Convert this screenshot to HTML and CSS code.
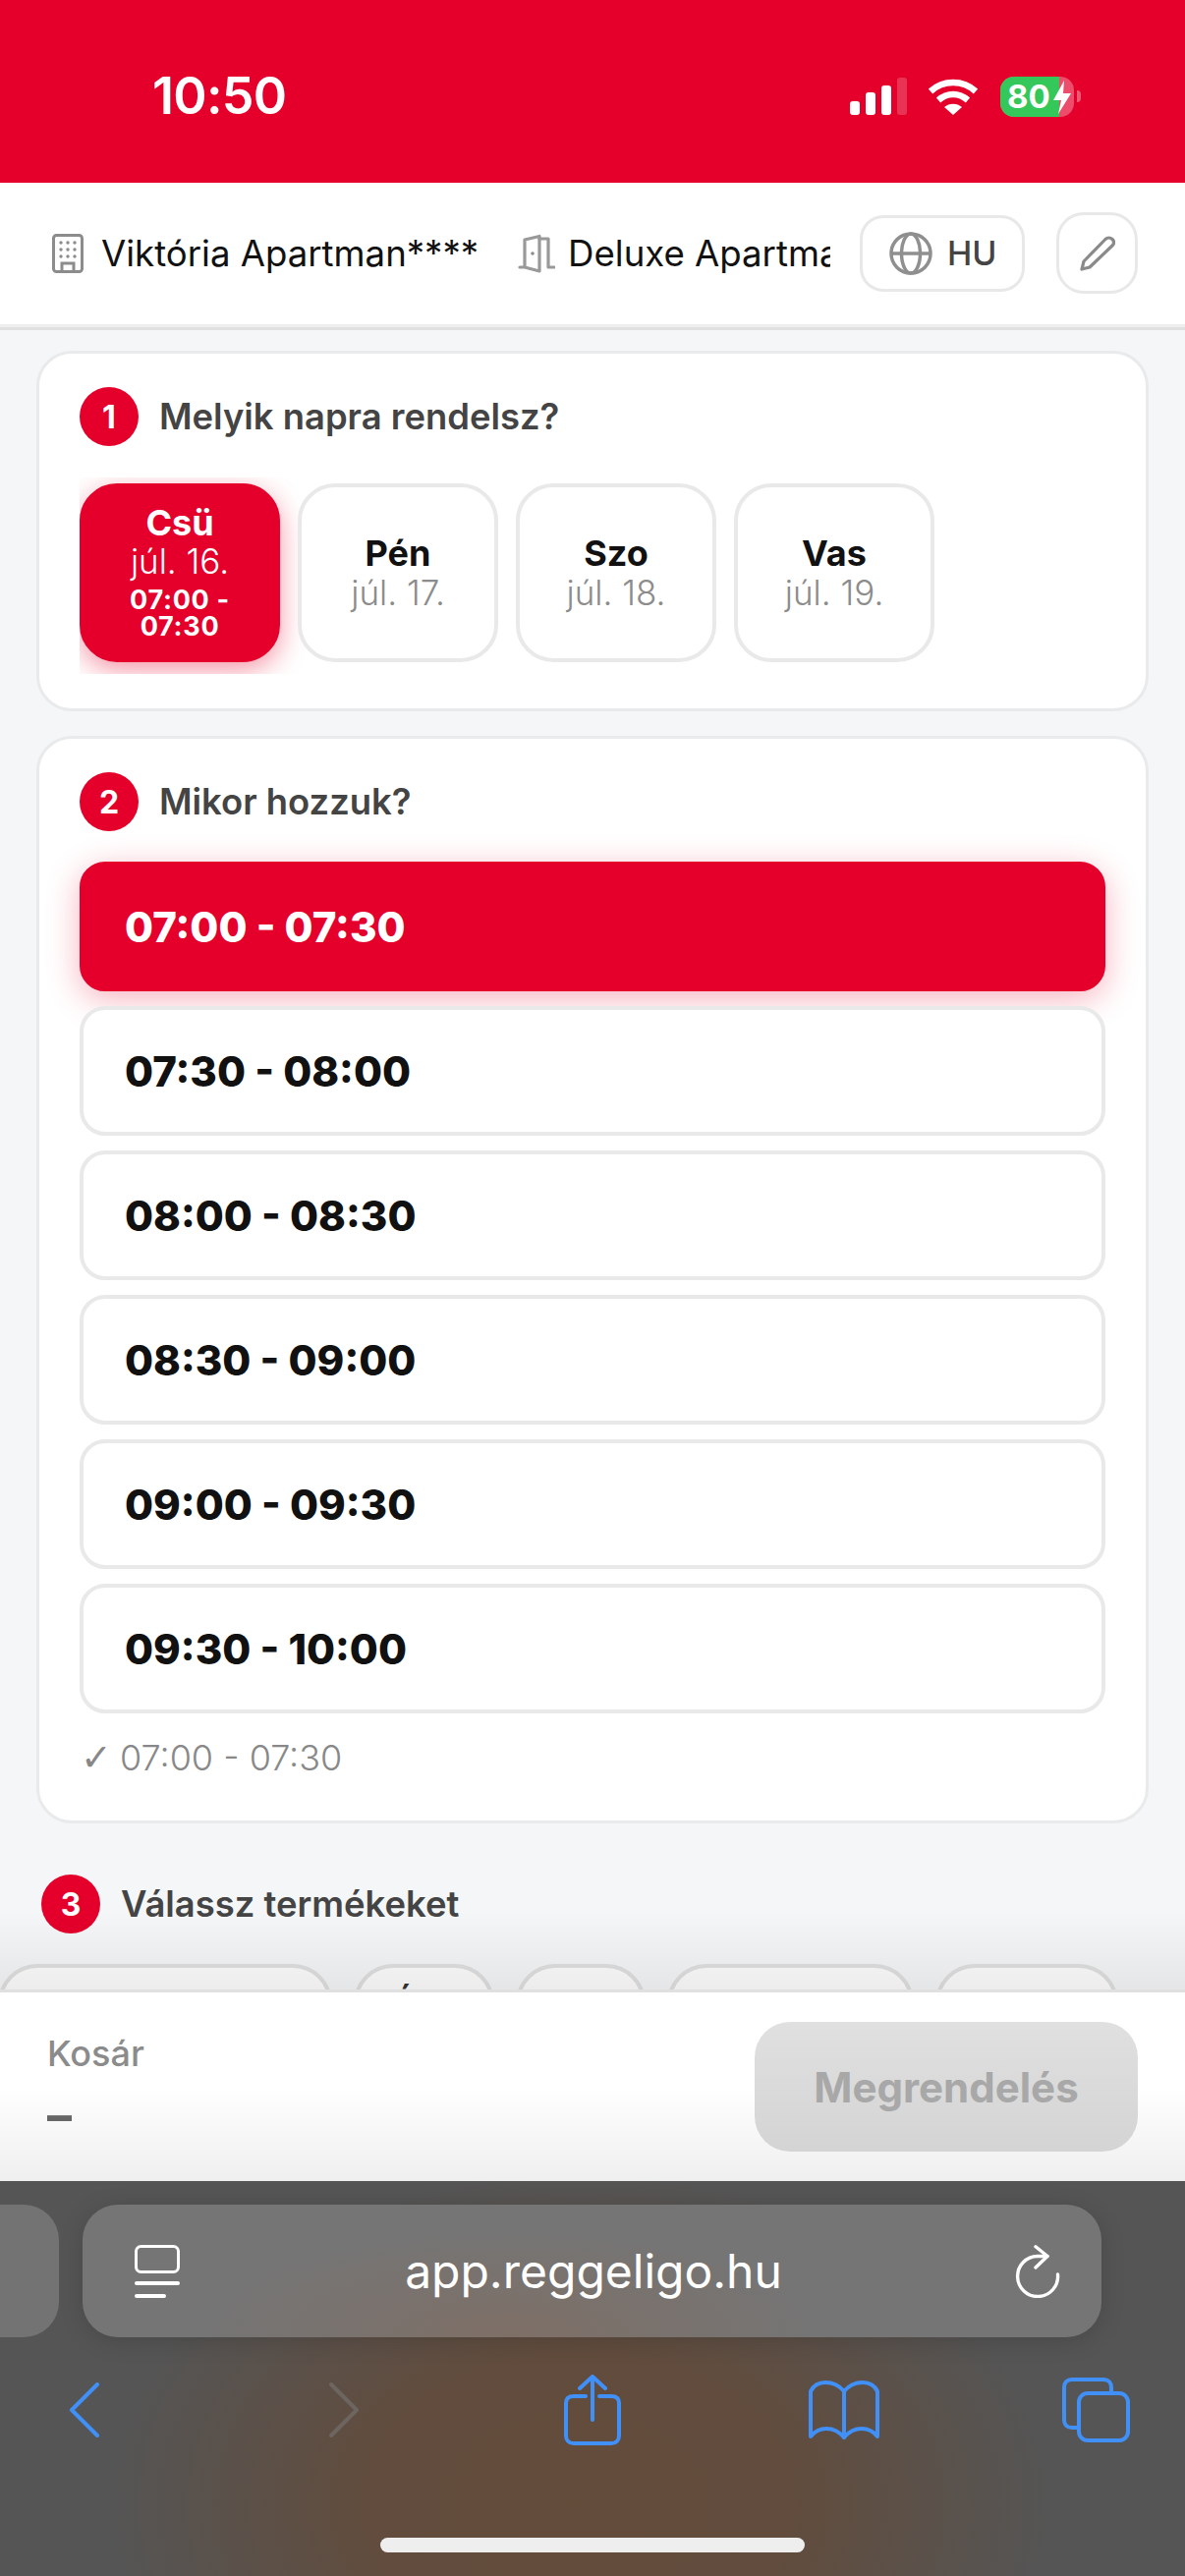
FILE: index.html
```html
<!DOCTYPE html>
<html lang="hu">
<head>
<meta charset="utf-8">
<title>Reggeligo</title>
<link rel="stylesheet" href="styles.css">
</head>
<body>
<div class="page">
  <div class="status">
    <span class="clock">10:50</span>
    <div class="status-icons">
      <svg width="58" height="38" viewBox="0 0 58 38"><g fill="#fff"><rect x="0" y="24" width="10" height="14" rx="3"/><rect x="16" y="15" width="10" height="23" rx="3"/><rect x="32" y="8" width="10" height="30" rx="3"/><rect x="48" y="0" width="10" height="38" rx="3" opacity=".2"/></g></svg>
      <svg class="wifi" width="52" height="38" viewBox="0 0 52 38"><g fill="none" stroke="#fff" stroke-width="6.500"><path d="M3 14 C16 2 36 2 49 14"/><path d="M11 23 C20 15 32 15 41 23"/></g><path d="M26 38 L17 30 C22 25.500 30 25.500 35 30 Z" fill="#fff"/></svg>
      <div class="battery"><div class="battery-fill"></div><span class="battery-num">80</span><svg class="bolt" width="18" height="34" viewBox="0 0 18 34"><path d="M11 0 L0 20 H8 L5 34 L18 13 H10 Z" fill="#fff"/></svg></div>
      <span class="nub"></span>
    </div>
  </div>

  <header class="header">
    <div class="crumbs">
      <svg class="ic-building" width="32" height="40" viewBox="0 0 32 40"><rect x="1.500" y="1.500" width="29" height="37" rx="3" fill="none" stroke="#8c8c8c" stroke-width="3"/><g fill="#8c8c8c"><circle cx="9" cy="9" r="1.700"/><circle cx="16" cy="9" r="1.700"/><circle cx="23" cy="9" r="1.700"/><circle cx="9" cy="16" r="1.700"/><circle cx="16" cy="16" r="1.700"/><circle cx="23" cy="16" r="1.700"/><circle cx="9" cy="23" r="1.700"/><circle cx="16" cy="23" r="1.700"/><circle cx="23" cy="23" r="1.700"/></g><path d="M10 38 V30 H22 V38" fill="none" stroke="#8c8c8c" stroke-width="3"/></svg>
      <span class="crumb-text">Viktória Apartman****</span>
      <svg class="ic-door" width="38" height="40" viewBox="0 0 38 40"><g fill="none" stroke="#999" stroke-width="3.200" stroke-linejoin="round" stroke-linecap="round"><path d="M2 34 H7 V6 L22 2.500 V38 L7 34"/><path d="M22 5 H31 V34 H37"/></g><circle cx="15" cy="20" r="1.800" fill="#8c8c8c"/></svg>
      <span class="crumb-text">Deluxe Apartman</span>
    </div>
    <div class="lang-btn">
      <svg width="44" height="44" viewBox="0 0 44 44"><g fill="none" stroke="#8f8f8f" stroke-width="3.500"><circle cx="22" cy="22" r="20"/><ellipse cx="22" cy="22" rx="9.500" ry="20"/><path d="M2 22 H42"/></g></svg>
      <span class="lang-text">HU</span>
    </div>
    <div class="edit-btn">
      <svg width="36" height="36" viewBox="0 0 36 36"><path d="M26 3.500 C28 1.500 31 1.500 33 3.500 C35 5.500 35 8 33 10 L10 32 L2 34 L4 26 Z" fill="none" stroke="#8a8a8a" stroke-width="3.200" stroke-linejoin="round"/></svg>
    </div>
  </header>

  <main class="main">
    <section class="card card-days">
      <div class="step">
        <span class="badge">1</span>
        <h2 class="step-title">Melyik napra rendelsz?</h2>
      </div>
      <div class="days">
        <div class="day day-on">
          <span class="day-name">Csü</span>
          <span class="day-date">júl. 16.</span>
          <span class="day-time">07:00 - 07:30</span>
        </div>
        <div class="day"><span class="day-name">Pén</span><span class="day-date">júl. 17.</span></div>
        <div class="day"><span class="day-name">Szo</span><span class="day-date">júl. 18.</span></div>
        <div class="day"><span class="day-name">Vas</span><span class="day-date">júl. 19.</span></div>
      </div>
    </section>

    <section class="card card-times">
      <div class="step">
        <span class="badge">2</span>
        <h2 class="step-title">Mikor hozzuk?</h2>
      </div>
      <div class="times">
        <div class="time time-on">07:00 - 07:30</div>
        <div class="time">07:30 - 08:00</div>
        <div class="time">08:00 - 08:30</div>
        <div class="time">08:30 - 09:00</div>
        <div class="time">09:00 - 09:30</div>
        <div class="time">09:30 - 10:00</div>
      </div>
      <p class="picked"><span class="tick">✓</span>07:00 - 07:30</p>
    </section>

    <div class="step step-free">
      <span class="badge">3</span>
      <h2 class="step-title">Válassz termékeket</h2>
    </div>
    <div class="chips">
      <span class="chip chip-a"></span>
      <span class="chip chip-b">É</span>
      <span class="chip chip-c"></span>
      <span class="chip chip-d"></span>
      <span class="chip chip-e"></span>
    </div>
    <div class="fade"></div>
  </main>

  <div class="cart">
    <div class="cart-info">
      <span class="cart-label">Kosár</span>
      <span class="cart-sum">–</span>
    </div>
    <div class="order-btn">Megrendelés</div>
  </div>

  <div class="safari">
    <div class="url-row">
      <div class="prev-tab"></div>
      <div class="url-bar">
        <svg width="46" height="54" viewBox="0 0 46 54"><rect x="1.500" y="1.500" width="43" height="26" rx="5" fill="none" stroke="#fff" stroke-width="3"/><rect x="0" y="37" width="46" height="4" rx="2" fill="#fff"/><rect x="0" y="50" width="32" height="4" rx="2" fill="#fff"/></svg>
        <span class="url-text">app.reggeligo.hu</span>
        <svg width="46" height="54" viewBox="0 0 46 54"><g fill="none" stroke="#fff" stroke-width="3.400" stroke-linecap="round" stroke-linejoin="round"><path d="M43.500 30 A20.500 20.500 0 1 1 23 11.500 H33"/><path d="M21 1.800 L33 11.500 L21 23"/></g></svg>
      </div>
    </div>
    <nav class="tools">
      <svg class="tool-back" width="32" height="56" viewBox="0 0 32 56"><path d="M29 2 L3 28 L29 54" fill="none" stroke="#4090f8" stroke-width="4" stroke-linecap="round" stroke-linejoin="round"/></svg>
      <svg class="tool-forward" width="32" height="56" viewBox="0 0 32 56"><path d="M3 2 L29 28 L3 54" fill="none" stroke="#6d655f" stroke-width="4" stroke-linecap="round" stroke-linejoin="round"/></svg>
      <svg class="tool-share" width="58" height="72" viewBox="0 0 58 72"><g fill="none" stroke="#4090f8" stroke-width="4" stroke-linecap="round" stroke-linejoin="round"><path d="M22 22 H10 C5 22 2 24 2 29 V62 C2 67 5 70 10 70 H48 C53 70 56 67 56 62 V29 C56 24 53 22 48 22 H36"/><path d="M29 46 V3"/><path d="M16 14 L29 2 L42 14"/></g></svg>
      <svg class="tool-book" width="72" height="60" viewBox="0 0 72 60"><g fill="none" stroke="#4090f8" stroke-width="4" stroke-linecap="round" stroke-linejoin="round"><path d="M36 11 C31 5 24 2 17 2 C10 2 5 5 2 11 V57 C6 52 11 49 18 49 C25 49 31 52 36 58 C41 52 47 49 54 49 C61 49 66 52 70 57 V11 C67 5 62 2 55 2 C48 2 41 5 36 11 Z"/><path d="M36 11 V58"/></g></svg>
      <svg class="tool-tabs" width="70" height="66" viewBox="0 0 70 66"><g fill="none" stroke="#4090f8" stroke-width="4" stroke-linejoin="round"><path d="M16 51 H10 C5 51 2 48 2 43 V10 C2 5 5 2 10 2 H42 C47 2 50 5 50 10 V16"/><rect x="17" y="16" width="50" height="48" rx="9"/></g></svg>
    </nav>
    <div class="home-bar"></div>
  </div>
</div>
</body>
</html>
```

FILE: styles.css
```css
* { box-sizing: border-box; }
html, body { margin: 0; padding: 0; }
body { font-family: Inter, "Liberation Sans", sans-serif; background: #f5f6f8; }
.page { width: 1206px; height: 2622px; display: flex; flex-direction: column; overflow: hidden; }

.status { height: 186px; flex: none; background: #e4002b; display: flex; align-items: flex-start; justify-content: space-between; padding: 71px 106px 0 155px; color: #fff; }
.clock { font-size: 52px; line-height: 54px; font-weight: 600; letter-spacing: -.7px; }
.status-icons { display: flex; align-items: center; margin-top: 7px; height: 40px; }
.wifi { margin-left: 21px; }
.battery { position: relative; margin-left: 22px; width: 75px; height: 41px; border-radius: 14px; background: rgba(255,255,255,.3); overflow: hidden; }
.battery-fill { width: 60px; height: 100%; background: #34c759; }
.battery-num { position: absolute; left: 7px; top: 0; font-size: 33px; line-height: 41px; font-weight: 700; color: #fff; }
.bolt { position: absolute; left: 54px; top: 4px; }
.nub { width: 4px; height: 12px; margin-left: 3px; border-radius: 0 4px 4px 0; background: rgba(255,255,255,.35); }

.header { height: 150px; flex: none; background: #fff; border-bottom: 3px solid #e0e0e0; box-shadow: inset 0 -3px 0 #eee; display: flex; align-items: center; padding: 0 48px 4px 53px; }
.crumbs { width: 792px; flex: none; display: flex; align-items: center; overflow: hidden; white-space: nowrap; }
.ic-building { flex: none; margin-right: 18px; }
.ic-door { flex: none; margin: 0 13px 0 40px; }
.crumb-text { font-size: 36.600px; color: #111; flex: none; }
.lang-btn { width: 168px; height: 78px; margin-left: 30px; flex: none; border: 3px solid #e8e8e8; border-radius: 24px; display: flex; align-items: center; padding-left: 27px; gap: 15px; }
.lang-text { font-size: 34px; font-weight: 500; color: #444; }
.edit-btn { width: 83px; height: 83px; margin-left: 32px; flex: none; border: 3px solid #e8e8e8; border-radius: 28px; display: flex; align-items: center; justify-content: center; }

.main { position: relative; flex: 1; min-height: 0; padding: 21px 37px 0; display: flex; flex-direction: column; overflow: hidden; }
.card { background: #fff; border: 3px solid #e9eaeb; border-radius: 36px; padding: 34px 41px 0; flex: none; }
.card-days { height: 367px; }
.card-times { height: 1107px; margin-top: 25px; }
.step { display: flex; align-items: center; gap: 21px; height: 60px; }
.badge { width: 60px; height: 60px; border-radius: 50%; background: #e4002b; color: #fff; font-size: 32px; font-weight: 700; display: flex; align-items: center; justify-content: center; flex: none; }
.step-title { margin: 0; font-size: 36.400px; line-height: 60px; font-weight: 600; color: #444; }
.days { display: flex; gap: 18px; margin: 32px 0 0; padding: 6px 0 12px; overflow: hidden; }
.day { width: 204px; height: 182px; flex: none; background: #fff; border: 4px solid #e9e9e9; border-radius: 38px; display: flex; flex-direction: column; align-items: center; justify-content: center; padding-bottom: 2px; }
.day-on { background: #e4002b; border-color: #e4002b; box-shadow: 0 8px 28px rgba(228,0,43,.42); color: #fff; padding-bottom: 4px; }
.day-name { font-size: 36px; line-height: 40px; font-weight: 700; color: #111; }
.day-date { font-size: 35px; line-height: 38px; font-weight: 300; color: #8c8c8c; margin-top: 1px; }
.day-on .day-name { color: #fff; }
.day-on .day-date { color: #fff; margin-top: 0; }
.day-time { font-size: 27px; line-height: 27px; font-weight: 700; letter-spacing: .7px; text-align: center; width: 130px; margin-top: 7px; }

.times { display: flex; flex-direction: column; gap: 15px; margin-top: 31px; }
.time { height: 132px; border: 4px solid #e9e9e9; border-radius: 26px; background: #fff; padding-left: 42px; display: flex; align-items: center; font-size: 42px; font-weight: 800; color: #111; }
.time-on { background: #e4002b; border-color: #e4002b; color: #fff; box-shadow: 0 8px 34px rgba(228,0,43,.3); }
.picked { margin: 23px 0 0 1px; display: flex; align-items: center; font-size: 36px; line-height: 44px; font-weight: 300; color: #888; }
.tick { width: 40px; flex: none; font-family: "DejaVu Sans", sans-serif; font-size: 38px; }

.step-free { margin: 52px 0 0 5px; flex: none; }
.chips { display: flex; gap: 22px; margin: 31px 0 0 -39px; flex: none; }
.chip { height: 120px; flex: none; border: 4px solid #e0e0e0; border-radius: 40px; background: #fdfdfd; font-size: 36px; line-height: 44px; font-weight: 600; color: #333; padding: 15px 0 0 36px; }
.chip-a { width: 340px; }
.chip-b { width: 143px; }
.chip-c { width: 132px; }
.chip-d { width: 251px; }
.chip-e { width: 186px; }
.fade { position: absolute; left: 0; right: 0; bottom: 0; height: 80px; background: linear-gradient(to bottom, rgba(0,0,0,0), rgba(0,0,0,.065)); }

.cart { height: 195px; flex: none; border-top: 3px solid #e0e0e0; background: linear-gradient(to bottom, #fff 0, #fff 50%, #efefef 100%); display: flex; align-items: flex-start; justify-content: space-between; padding: 30px 48px 0; }
.cart-info { display: flex; flex-direction: column; }
.cart-label { font-size: 36px; line-height: 44px; font-weight: 500; color: #8b8b8b; margin-top: 10px; }
.cart-sum { font-size: 50px; line-height: 50px; font-weight: 700; color: #666; margin-top: 16px; }
.order-btn { width: 390px; height: 132px; border-radius: 36px; background: linear-gradient(to bottom, #e0e0e0, #d4d4d4); display: flex; align-items: center; justify-content: center; font-size: 42px; font-weight: 700; color: #a8a8a8; }

.safari { position: relative; height: 402px; flex: none; background: radial-gradient(ellipse 480px 340px at 590px 330px, #644c3b 0, #614c3d 45%, #555 100%), #555; overflow: hidden; }
.url-row { display: flex; gap: 24px; padding-top: 24px; }
.prev-tab { width: 60px; height: 135px; flex: none; background: #737373; border-radius: 0 36px 36px 0; }
.url-bar { width: 1037px; height: 135px; flex: none; border-radius: 36px; background: radial-gradient(ellipse 320px 110px at 42% 100%, #7e6f66, #757575); box-shadow: 0 4px 24px rgba(0,0,0,.15); display: flex; align-items: center; justify-content: space-between; padding: 0 42px 0 53px; }
.url-text { font-size: 48px; color: #fff; margin-right: 8px; }
.tools { display: flex; align-items: center; height: 72px; margin-top: 38px; padding-left: 70px; }
.tool-forward { margin-left: 232px; }
.tool-share { margin-left: 208px; }
.tool-book { margin-left: 191px; }
.tool-tabs { margin-left: 186px; }
.home-bar { position: absolute; left: 387px; bottom: 24px; width: 432px; height: 15px; border-radius: 8px; background: #eee; }
```
